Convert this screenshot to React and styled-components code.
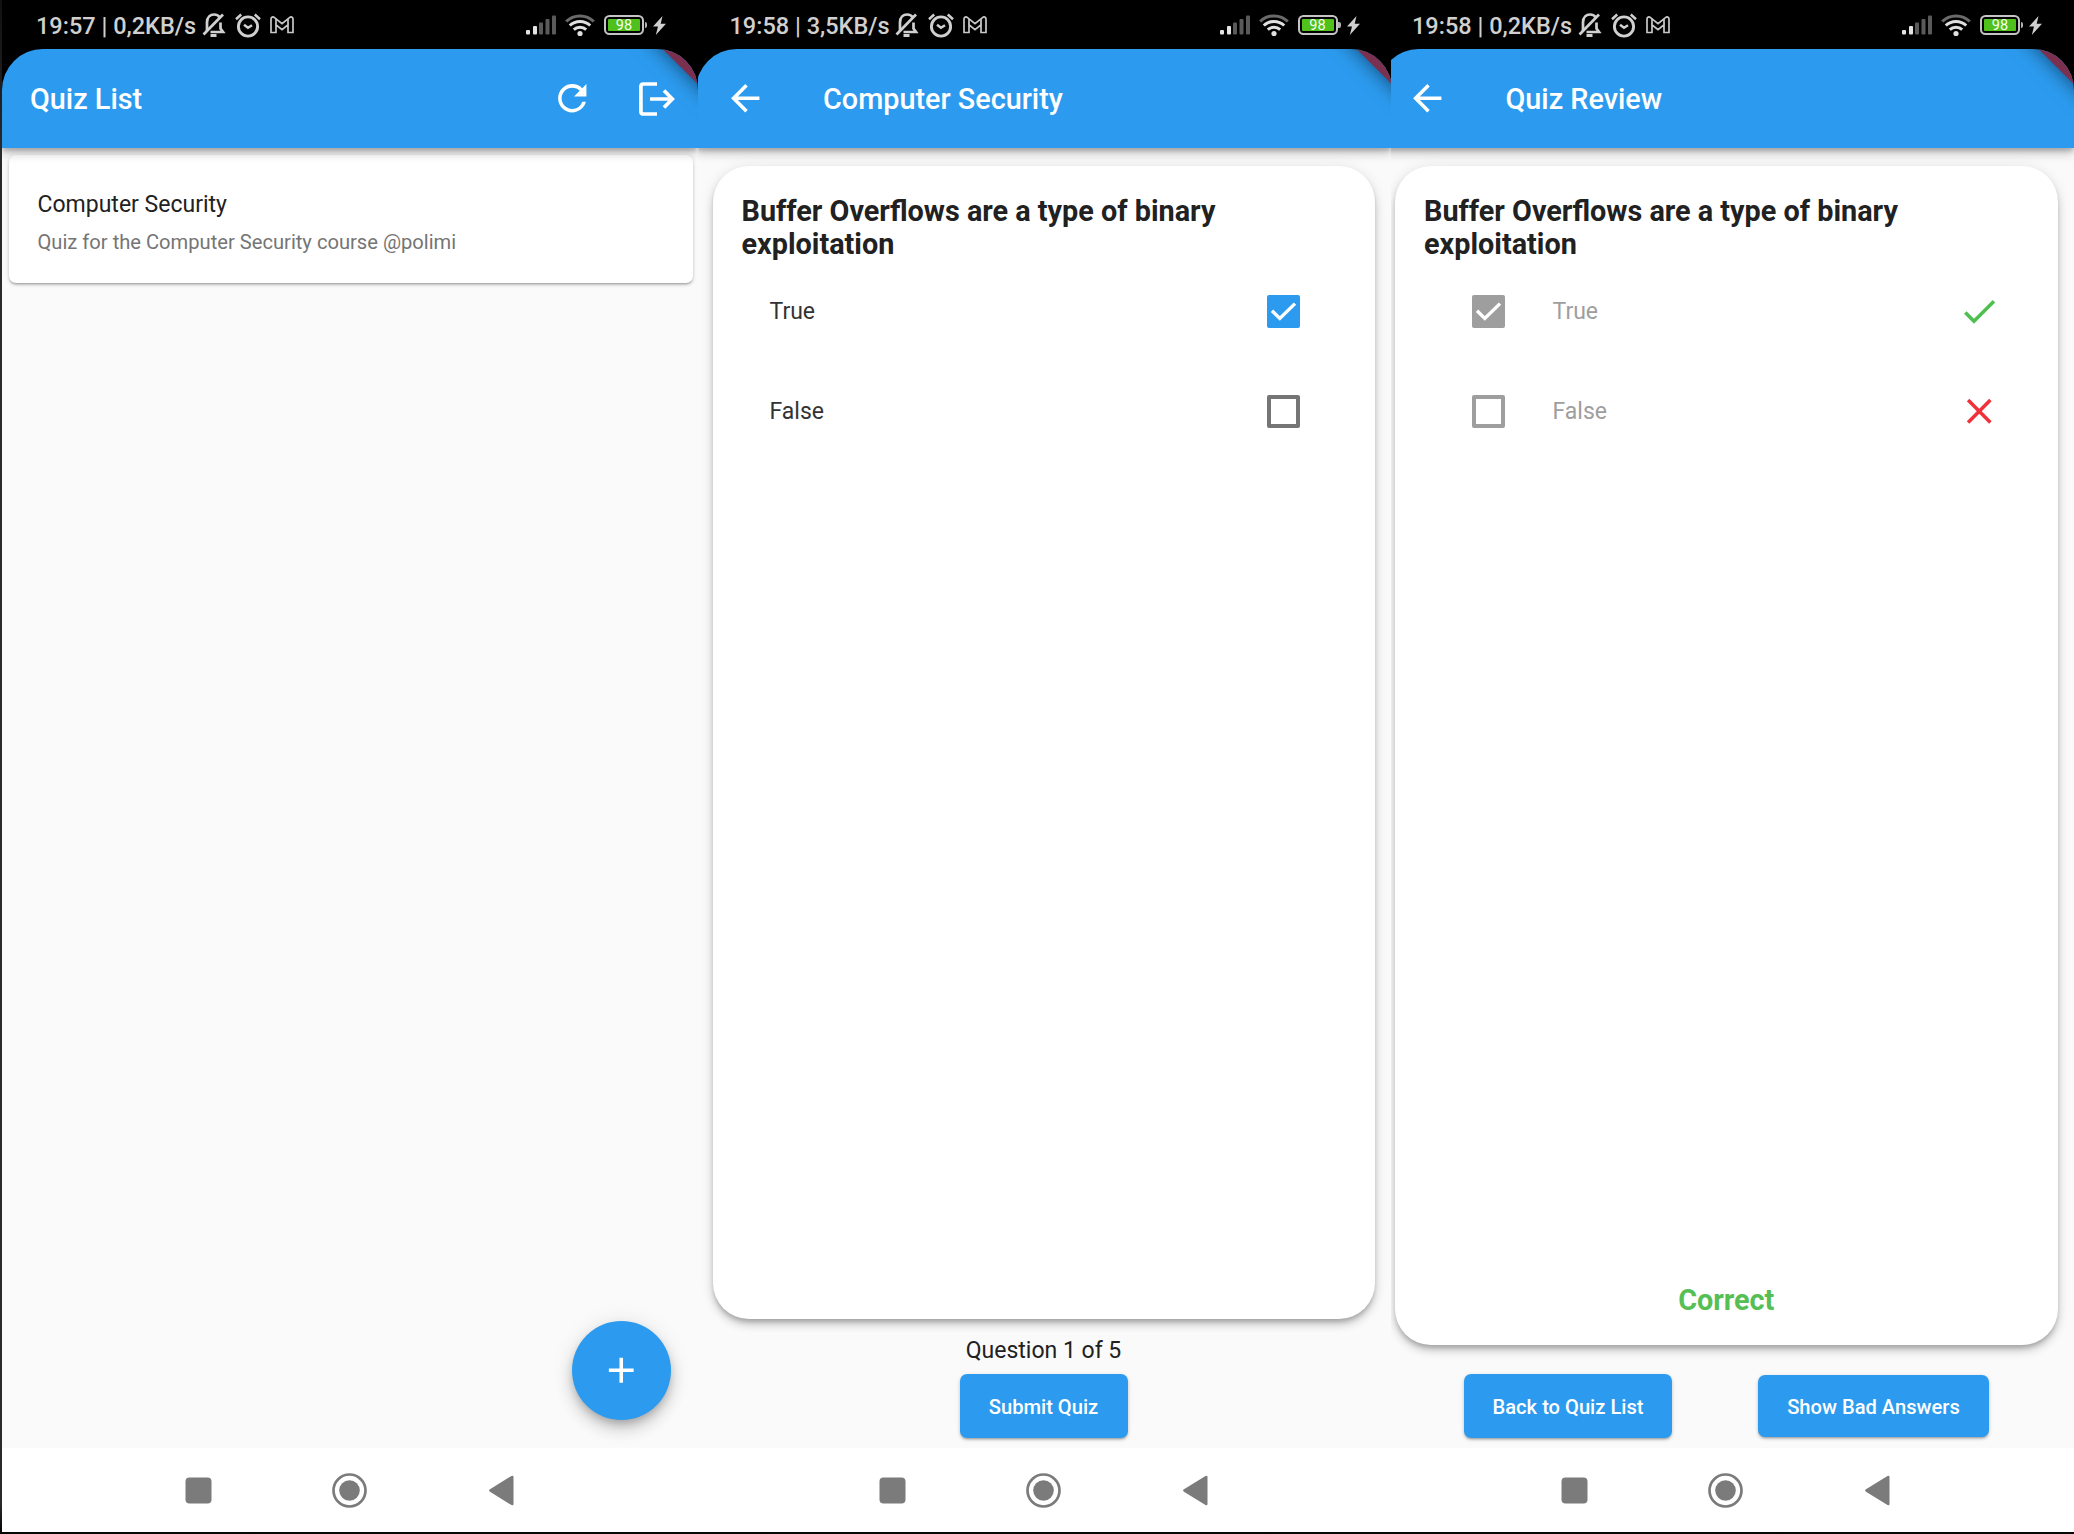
import React from "react";
import styled, { createGlobalStyle, css } from "styled-components";
import { MdRefresh, MdArrowBack, MdAdd, MdCheck, MdClose } from "react-icons/md";

const BLUE = "#2c9bef";
const ICON = 42.5;

const GlobalStyle = createGlobalStyle`
  * { box-sizing: border-box; }
  html, body { margin: 0; background: #000; overflow: hidden; }
  body { font-family: Roboto, "Noto Sans", sans-serif; color: #212121; }
  svg { display: block; flex: none; }
`;

const elevation = css`
  box-shadow: 0 4px 4px -1px rgba(0, 0, 0, 0.18), 0 6px 9px rgba(0, 0, 0, 0.14),
    0 2px 14px rgba(0, 0, 0, 0.1);
`;

const lowElevation = css`
  box-shadow: 0 2px 2px -1px rgba(0, 0, 0, 0.2), 0 2px 3px rgba(0, 0, 0, 0.14),
    0 1px 5px rgba(0, 0, 0, 0.1);
`;

const Board = styled.main`
  display: grid;
  grid-template-columns: 696px 693px 683px;
  width: 2074px;
  height: 1534px;
  padding: 0 0 2px 2px;
  background: linear-gradient(#111, #2a2a2a 10%, #2a2a2a 98%, #050505);
`;

const Slot = styled.section`
  overflow: hidden;
  background: #000;
`;

const Phone = styled.div`
  display: flex;
  flex-direction: column;
  width: 696px;
  height: 1532px;
  margin-left: ${(p) => -p.$cut}px;
`;

const StatusBar = styled.div`
  display: flex;
  align-items: center;
  justify-content: space-between;
  height: 49px;
  padding: 1px 32px 0 34px;
  background: #000;
  color: #d0d0d0;
`;

const StatusSide = styled.div`
  display: flex;
  align-items: center;
  gap: ${(p) => p.$gap || 0}px;
`;

const StatusText = styled.span`
  width: 165.5px;
  padding-top: 2px;
  font-size: 23.5px;
  font-weight: 500;
  line-height: 46px;
  white-space: nowrap;
`;

const Header = styled.header`
  position: relative;
  z-index: 2;
  display: flex;
  height: 99px;
  background: #000;
  ${elevation}
`;

const AppBar = styled.div`
  position: relative;
  flex: 1;
  display: flex;
  align-items: center;
  gap: ${(p) => (p.$back ? 57 : 0)}px;
  padding: 0 23px 0 28px;
  overflow: hidden;
  border-radius: 41px 41px 0 0;
  background: ${BLUE};
  color: #fff;
`;

const DebugBanner = styled.div`
  position: absolute;
  top: -35px;
  right: -55px;
  width: 130px;
  height: 50px;
  transform: rotate(45deg);
  background: #7b3050;
  box-shadow: 0 0 20px rgba(0, 0, 0, 0.55);
`;

const Title = styled.h1`
  flex: 1;
  margin: 0;
  font-size: 28.8px;
  font-weight: 500;
  white-space: nowrap;
`;

const Actions = styled.div`
  display: flex;
  align-items: center;
  gap: 46px;
`;

const Body = styled.div`
  position: relative;
  flex: 1;
  display: flex;
  flex-direction: column;
  min-height: 0;
  background: #fafafa;
`;

const ListCard = styled.article`
  display: flex;
  flex-direction: column;
  margin: 7px 5.5px 0 7px;
  height: 128px;
  padding: 36px 28.5px 0;
  border-radius: 7px;
  background: #fff;
  ${lowElevation}
`;

const ListTitle = styled.div`
  font-size: 23px;
  line-height: 28px;
`;

const ListSubtitle = styled.div`
  margin-top: 10px;
  color: #757575;
  font-size: 20.15px;
  line-height: 26px;
`;

const Fab = styled.button`
  position: absolute;
  right: 27px;
  bottom: 28.5px;
  display: grid;
  place-items: center;
  width: 99px;
  height: 99px;
  padding: 0;
  border: 0;
  border-radius: 50%;
  background: ${BLUE};
  color: #fff;
  box-shadow: 0 5px 9px -2px rgba(0, 0, 0, 0.2), 0 10px 16px rgba(0, 0, 0, 0.14),
    0 2px 22px rgba(0, 0, 0, 0.1);
`;

const QuizCard = styled.article`
  display: flex;
  flex-direction: column;
  height: ${(p) => p.$height}px;
  margin: 18px 16.5px 0 17px;
  padding: 29px 29px 0;
  border-radius: 36px;
  background: #fff;
  ${elevation}
`;

const Question = styled.h2`
  margin: 0;
  font-size: 28.8px;
  font-weight: 700;
  line-height: 33.2px;
`;

const Options = styled.div`
  display: flex;
  flex-direction: column;
`;

const Option = styled.label`
  display: flex;
  align-items: center;
  gap: ${(p) => (p.$review ? 47.5 : 0)}px;
  height: 100px;
  padding: ${(p) => (p.$review ? "0 28px 0 48px" : "0 46.5px 0 28px")};
  color: ${(p) => (p.$review ? "#9e9e9e" : "#333")};
  font-size: 23px;
`;

const OptionText = styled.span`
  flex: 1;
`;

const Box = styled.span`
  display: grid;
  place-items: center;
  width: 33px;
  height: 33px;
  border: ${(p) => (p.$checked ? 0 : 4)}px solid ${(p) => p.$color};
  border-radius: 2px;
  background: ${(p) => (p.$checked ? p.$color : "transparent")};
`;

const Verdict = styled.div`
  margin-top: auto;
  padding-bottom: 28px;
  color: #55bf55;
  font-size: 28.8px;
  font-weight: 700;
  line-height: 33px;
  text-align: center;
`;

const Counter = styled.div`
  margin-top: 18px;
  font-size: 23px;
  line-height: 28px;
  text-align: center;
`;

const ButtonRow = styled.div`
  display: flex;
  align-items: center;
  justify-content: ${(p) => (p.$pair ? "flex-start" : "center")};
  gap: 86px;
  margin-top: ${(p) => p.$top}px;
  padding-left: ${(p) => (p.$pair ? 86 : 0)}px;
`;

const Button = styled.button`
  width: ${(p) => p.$width}px;
  height: ${(p) => p.$height || 64}px;
  padding: 2px 0 0;
  border: 0;
  border-radius: 7px;
  background: ${BLUE};
  color: #fff;
  font: 500 20.15px Roboto, sans-serif;
  white-space: nowrap;
  ${lowElevation}
`;

const NavBar = styled.nav`
  display: flex;
  align-items: center;
  justify-content: center;
  height: 84px;
  background: #fff;
`;

function BellOff() {
  return (
    <svg width="24" height="26" viewBox="0 0 24 26" fill="none" stroke="#d0d0d0" strokeWidth="2.7">
      <path d="M5 19V10.500C5 5 8.500 2.500 12 2.500c2.500 0 4.600 1 5.800 3" />
      <path d="M18.500 10.500v6l2.500 3.500H8.500" />
      <path d="M1.500 22.500 21 2.500" />
      <path d="M8.500 23.500h6" strokeWidth="3" />
    </svg>
  );
}

function Alarm() {
  return (
    <svg width="26" height="25" viewBox="0 0 26 25" fill="none" stroke="#d0d0d0">
      <circle cx="13" cy="13.500" r="9.600" strokeWidth="2.900" />
      <path d="M9 11.800l4 3 4-2.500" strokeWidth="2.500" />
      <path d="M1 6.200 6.200 1.500M25 6.200 19.800 1.500" strokeWidth="2.500" />
    </svg>
  );
}

function Mail() {
  return (
    <svg width="24" height="18" viewBox="0 0 24 18" fill="none" stroke="#c8c8c8" strokeWidth="1.700">
      <path d="M1 16.500V3c0-2 2-2.600 3.500-1.400L12 7.600l7.500-6C21 .4 23 1 23 3v13.500h-5V8.800l-6 4.800-6-4.800v7.700z" />
      <path d="M6 8.500V3M18 8.500V3" />
    </svg>
  );
}

function Signal() {
  return (
    <svg width="32" height="20" viewBox="-2 0 32 20">
      <rect x="0" y="15" width="4" height="4.500" rx="1" fill="#e4e4e4" />
      <rect x="7" y="11" width="4" height="8.500" rx="1" fill="#e4e4e4" />
      <rect x="13" y="7.500" width="4" height="12" rx="1" fill="#5a5a5a" />
      <rect x="19.500" y="4" width="4" height="15.500" rx="1" fill="#5a5a5a" />
      <rect x="26" y="0.500" width="4" height="19" rx="1" fill="#5a5a5a" />
    </svg>
  );
}

function Wifi() {
  return (
    <svg width="30" height="23" viewBox="0 0 30 23" fill="none" strokeWidth="3">
      <path d="M1.200 7.500C8.500 0 21.500 0 28.800 7.500" stroke="#6a6a6a" />
      <path d="M4.800 11.500c5.600-5.500 14.800-5.500 20.400 0" stroke="#e0e0e0" />
      <path d="M8.800 15.700c3.500-3.300 8.900-3.300 12.400 0" stroke="#e0e0e0" />
      <circle cx="15" cy="19.500" r="2.600" fill="#e0e0e0" />
    </svg>
  );
}

const BatteryShell = styled.div`
  position: relative;
  display: flex;
  width: 40px;
  height: 20px;
  padding: 2px;
  border: 2px solid #c4c4c4;
  border-radius: 5.5px;

  &::after {
    content: "";
    position: absolute;
    top: 5px;
    right: -5px;
    width: 2.5px;
    height: 6px;
    border-radius: 0 2px 2px 0;
    background: #b0b0b0;
  }
`;

const BatteryLevel = styled.div`
  flex: 1;
  border-radius: 1px;
  background: #4fc01c;
  color: #f4fff0;
  font-size: 14.5px;
  line-height: 13px;
  text-align: center;
`;

function Bolt() {
  return (
    <svg width="13" height="19" viewBox="0 0 13 19" fill="#d0d0d0">
      <path d="M9.500 0 0 10.500h5L2.800 19 13 7.800H7.700z" />
    </svg>
  );
}

function Exit() {
  return (
    <svg width="36" height="34" viewBox="0 0 36 34" fill="none" stroke="#fff" strokeWidth="3.700">
      <path d="M18 2H4.500Q1.900 2 1.900 4.600V29.400Q1.900 32 4.500 32H18" />
      <path d="M11 17H33M25 8.500 33.300 17 25 25.500" />
    </svg>
  );
}

const NavIcons = () => (
  <NavBar>
    <svg width="330" height="36" viewBox="0.5 -0.5 330 36" fill="#7b7b7b">
      <rect x="1" y="5" width="26" height="26" rx="4" />
      <circle cx="165" cy="18" r="16" fill="none" stroke="#7b7b7b" strokeWidth="2.700" />
      <circle cx="165" cy="18" r="10.300" />
      <path d="M305.500 16.800 327 3.400Q329 2.600 329 4.600V31.400Q329 33.400 327 32.600L305.500 19.200Q303.600 18 305.500 16.800Z" />
    </svg>
  </NavBar>
);

function Checkbox({ checked, color }) {
  return (
    <Box $checked={checked} $color={color}>
      {checked && (
        <svg width="33" height="33" viewBox="0 0 33 33" fill="none" stroke="#fff" strokeWidth="3.400">
          <path d="M5 15.800 12.800 23.400 28 8.600" />
        </svg>
      )}
    </Box>
  );
}

function Screen({ cut = 0, clock, speed, title, back, actions, children }) {
  return (
    <Slot>
      <Phone $cut={cut}>
        <StatusBar>
          <StatusSide>
            <StatusText>
              {clock} | {speed}
            </StatusText>
            <StatusSide $gap={9}>
              <BellOff />
              <Alarm />
              <Mail />
            </StatusSide>
          </StatusSide>
          <StatusSide $gap={9}>
            <Signal />
            <Wifi />
            <BatteryShell>
              <BatteryLevel>98</BatteryLevel>
            </BatteryShell>
            <Bolt />
          </StatusSide>
        </StatusBar>
        <Header>
          <AppBar $back={back}>
            <DebugBanner />
            {back && <MdArrowBack size={ICON} />}
            <Title>{title}</Title>
            {actions}
          </AppBar>
        </Header>
        <Body>{children}</Body>
        <NavIcons />
      </Phone>
    </Slot>
  );
}

const QUESTION = "Buffer Overflows are a type of binary exploitation";

export default function App() {
  return (
    <>
      <GlobalStyle />
      <Board>
        <Screen
          clock="19:57"
          speed="0,2KB/s"
          title="Quiz List"
          actions={
            <Actions>
              <MdRefresh size={ICON} />
              <Exit />
            </Actions>
          }
        >
          <ListCard>
            <ListTitle>Computer Security</ListTitle>
            <ListSubtitle>Quiz for the Computer Security course @polimi</ListSubtitle>
          </ListCard>
          <Fab>
            <MdAdd size={ICON} />
          </Fab>
        </Screen>

        <Screen cut={2.5} clock="19:58" speed="3,5KB/s" title="Computer Security" back>
          <QuizCard $height={1153}>
            <Question>{QUESTION}</Question>
            <Options>
              <Option>
                <OptionText>True</OptionText>
                <Checkbox checked color={BLUE} />
              </Option>
              <Option>
                <OptionText>False</OptionText>
                <Checkbox color="#757575" />
              </Option>
            </Options>
          </QuizCard>
          <Counter>Question 1 of 5</Counter>
          <ButtonRow $top={8.5}>
            <Button $width={168}>Submit Quiz</Button>
          </ButtonRow>
        </Screen>

        <Screen cut={13} clock="19:58" speed="0,2KB/s" title="Quiz Review" back>
          <QuizCard $height={1179}>
            <Question>{QUESTION}</Question>
            <Options>
              <Option $review>
                <Checkbox checked color="#9e9e9e" />
                <OptionText>True</OptionText>
                <MdCheck size={ICON} color="#4fc04f" />
              </Option>
              <Option $review>
                <Checkbox color="#9e9e9e" />
                <OptionText>False</OptionText>
                <MdClose size={ICON} color="#f0303a" />
              </Option>
            </Options>
            <Verdict>Correct</Verdict>
          </QuizCard>
          <ButtonRow $pair $top={28.5}>
            <Button $width={208}>Back to Quiz List</Button>
            <Button $width={231} $height={62}>Show Bad Answers</Button>
          </ButtonRow>
        </Screen>
      </Board>
    </>
  );
}
